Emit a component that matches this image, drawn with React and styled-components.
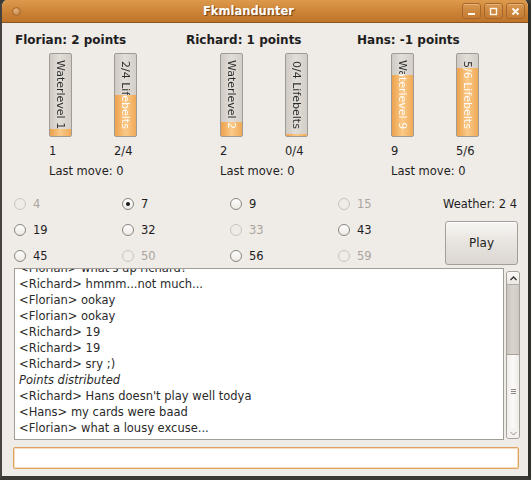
import React from 'react'
import styled, { createGlobalStyle } from 'styled-components'

const GlobalStyle = createGlobalStyle`
  html, body {
    margin: 0;
    padding: 0;
    background: #3c3b37;
  }
  * {
    box-sizing: border-box;
  }
`

const players = [
  { name: 'Florian', points: 2, water: 1, belts: 2, maxBelts: 4, last: 0 },
  { name: 'Richard', points: 1, water: 2, belts: 0, maxBelts: 4, last: 0 },
  { name: 'Hans', points: -1, water: 9, belts: 5, maxBelts: 6, last: 0 },
]

const cards = [
  { n: 4, off: true }, { n: 7, checked: true }, { n: 9 }, { n: 15, off: true },
  { n: 19 }, { n: 32 }, { n: 33, off: true }, { n: 43 },
  { n: 45 }, { n: 50, off: true }, { n: 56 }, { n: 59, off: true },
]

const chat = [
  { t: "<Florian> what's up richard?" },
  { t: '<Richard> hmmm...not much...' },
  { t: '<Florian> ookay' },
  { t: '<Florian> ookay' },
  { t: '<Richard> 19' },
  { t: '<Richard> 19' },
  { t: '<Richard> sry ;)' },
  { t: 'Points distributed', info: true },
  { t: "<Richard> Hans doesn't play well todya" },
  { t: '<Hans> my cards were baad' },
  { t: '<Florian> what a lousy excuse...' },
]

const WATER_MAX = 12

// progress bar: orange fill from the bottom, label turns white where it sits on the fill
const ProgressBar = ({ label, value }) => {
  const pct = Math.round(Math.max(value, 0.025) * 1000) / 10
  return (
    <Bar>
      <Fill $pct={pct} />
      <BarLabel $pct={pct}><Vert>{label}</Vert></BarLabel>
    </Bar>
  )
}

const Radio = ({ n, off, checked }) => (
  <RadioItem $off={off}>
    <Circle $off={off}>{checked && <Dot />}</Circle>
    <span>{n}</span>
  </RadioItem>
)

const App = () => {
  return (
    <>
      <GlobalStyle />
      <Window>
        <TitleBar>
          <MenuDot />
          <Title>Fkmlandunter</Title>
          <WinButtons>
            <WinButton>
              <svg width="9" height="9" viewBox="0 0 9 9"><rect x="1" y="6" width="7" height="2" fill="#fff7ec" /></svg>
            </WinButton>
            <WinButton>
              <svg width="9" height="9" viewBox="0 0 9 9"><rect x="1.5" y="1.5" width="6" height="6" fill="none" stroke="#fff7ec" strokeWidth="1.4" /></svg>
            </WinButton>
            <WinButton>
              <svg width="9" height="9" viewBox="0 0 9 9"><path d="M1.5 1.5 L7.5 7.5 M7.5 1.5 L1.5 7.5" stroke="#fff7ec" strokeWidth="2" /></svg>
            </WinButton>
          </WinButtons>
        </TitleBar>

        <Body>
          <Players>
            {players.map((p) => (
              <Player key={p.name}>
                <PlayerName>{p.name}: {p.points} points</PlayerName>
                <Stats>
                  <Stat>
                    <ProgressBar label={`Waterlevel ${p.water}`} value={p.water / WATER_MAX} />
                    <StatValue>{p.water}</StatValue>
                  </Stat>
                  <Stat>
                    <ProgressBar label={`${p.belts}/${p.maxBelts} Lifebelts`} value={p.belts / p.maxBelts} />
                    <StatValue>{p.belts}/{p.maxBelts}</StatValue>
                  </Stat>
                </Stats>
                <LastMove>Last move: {p.last}</LastMove>
              </Player>
            ))}
          </Players>

          <Controls>
            <RadioGrid>
              {cards.map((c) => <Radio key={c.n} {...c} />)}
            </RadioGrid>
            <Side>
              <Weather>Weather: 2 4</Weather>
              <PlayButton>Play</PlayButton>
            </Side>
          </Controls>

          <ChatRow>
            <ChatLog>
              {chat.map((l, i) => (
                <ChatLine key={i} $info={l.info}>{l.t}</ChatLine>
              ))}
            </ChatLog>
            <Scrollbar>
              <Stepper>
                <svg width="7" height="5" viewBox="0 0 7 5"><path d="M0.5 4 L3.5 1 L6.5 4" fill="none" stroke="#333" strokeWidth="1.3" /></svg>
              </Stepper>
              <Trough />
              <Thumb>
                <Grip />
              </Thumb>
              <Stepper $down>
                <svg width="7" height="5" viewBox="0 0 7 5"><path d="M0.5 1 L3.5 4 L6.5 1" fill="none" stroke="#9a958f" strokeWidth="1" /></svg>
              </Stepper>
            </Scrollbar>
          </ChatRow>

          <Input />
        </Body>
      </Window>
    </>
  )
}

export default App


const Window = styled.div`
  width: 531px;
  height: 480px;
  display: flex;
  flex-direction: column;
  background: #efebe7;
  border-left: 2px solid #45433f;
  border-right: 3px solid #2f2e2b;
  border-bottom: 4px solid #3a3935;
  border-radius: 7px 7px 0 0;
  overflow: hidden;
  font-family: "DejaVu Sans", sans-serif;
  color: #1e1e1e;
`

const TitleBar = styled.div`
  height: 23px;
  flex: none;
  display: flex;
  align-items: center;
  padding: 0 3px 0 8px;
  background: linear-gradient(to bottom, #dd9a4c 0%, #cf873a 45%, #bf7429 100%);
  border-bottom: 1px solid #8a5420;
`

const MenuDot = styled.div`
  width: 9px;
  height: 9px;
  border-radius: 50%;
  margin-left: 2px;
  background: radial-gradient(circle at 40% 35%, #e7b27a, #b87a3c);
  border: 1px solid #a8692d;
`

const Title = styled.div`
  flex: 1;
  text-align: center;
  color: #fff;
  font-weight: bold;
  font-size: 11.5px;
  text-shadow: 1px 1px 1px #6b3e12;
  padding-left: 14px;
`

const WinButtons = styled.div`
  display: flex;
  gap: 3px;
`

const WinButton = styled.div`
  width: 19px;
  height: 16px;
  display: flex;
  align-items: center;
  justify-content: center;
  border-radius: 3px;
  border: 1px solid #a8672a;
  background: linear-gradient(to bottom, #d8974f, #c47b33);
  box-shadow: inset 0 1px 0 rgba(255, 230, 190, 0.4);
`

const Body = styled.div`
  flex: 1;
  display: flex;
  flex-direction: column;
  padding: 10px 8px 0 10px;
`

const Players = styled.div`
  display: grid;
  grid-template-columns: 171px 171px 1fr;
`

const Player = styled.div`
  display: flex;
  flex-direction: column;
  padding-left: 3px;
`

const PlayerName = styled.div`
  font-weight: bold;
  font-size: 12px;
  line-height: 15px;
`

const Stats = styled.div`
  display: flex;
  gap: 42px;
  margin-top: 5px;
  padding-left: 34px;
`

const Stat = styled.div`
  display: flex;
  flex-direction: column;
`

const StatValue = styled.div`
  font-size: 11.5px;
  line-height: 14px;
  margin-top: 7px;
`

const LastMove = styled.div`
  font-size: 11.5px;
  line-height: 14px;
  margin-top: 6px;
  padding-left: 34px;
`

const Bar = styled.div`
  position: relative;
  width: 23px;
  height: 84px;
  display: flex;
  align-items: center;
  justify-content: center;
  border: 1px solid #a19b93;
  border-radius: 2px;
  background: linear-gradient(to right, #cfcac3, #e1ddd7 45%, #d3cec8);
  overflow: hidden;
`

const Fill = styled.div`
  position: absolute;
  left: 0;
  right: 0;
  bottom: 0;
  height: ${({ $pct }) => $pct}%;
  background: linear-gradient(to right, #eca14c, #fbca88 50%, #efa958);
`

const BarLabel = styled.div`
  position: relative;
  width: 100%;
  height: 100%;
  display: flex;
  align-items: center;
  justify-content: center;
  font-size: 11px;
  color: transparent;
  background: linear-gradient(to top, #ffffff ${({ $pct }) => $pct}%, #2a2a2a ${({ $pct }) => $pct}%);
  -webkit-background-clip: text;
  background-clip: text;
`

const Vert = styled.span`
  writing-mode: vertical-rl;
  white-space: nowrap;
`

const Controls = styled.div`
  display: flex;
  margin-top: 13px;
`

const RadioGrid = styled.div`
  display: grid;
  grid-template-columns: repeat(4, 108px);
  grid-template-rows: 26px 26px 25px;
  padding-left: 2px;
`

const RadioItem = styled.div`
  display: flex;
  align-items: center;
  gap: 7px;
  font-size: 11.5px;
  color: ${({ $off }) => ($off ? '#aaa59f' : '#1e1e1e')};
`

const Circle = styled.div`
  width: 12px;
  height: 12px;
  border-radius: 50%;
  display: flex;
  align-items: center;
  justify-content: center;
  border: 1px solid ${({ $off }) => ($off ? '#c9c4be' : '#8a857f')};
  background: ${({ $off }) => ($off ? '#efebe7' : 'linear-gradient(to bottom, #ffffff, #ece8e3)')};
`

const Dot = styled.div`
  width: 4px;
  height: 4px;
  border-radius: 50%;
  background: #1a1a1a;
`

const Side = styled.div`
  display: flex;
  flex-direction: column;
  align-items: flex-start;
  margin-left: -1px;
`

const Weather = styled.div`
  font-size: 11.5px;
  line-height: 26px;
  white-space: nowrap;
  margin-left: -2px;
`

const PlayButton = styled.div`
  width: 73px;
  height: 44px;
  margin-top: 4px;
  display: flex;
  align-items: center;
  justify-content: center;
  font-size: 12px;
  color: #1e1e1e;
  border: 1px solid #a39e97;
  border-radius: 3px;
  background: linear-gradient(to bottom, #f7f5f3, #e6e2dd 55%, #dbd6d0);
  box-shadow: inset 0 1px 0 #ffffff;
`

const ChatRow = styled.div`
  display: flex;
  gap: 2px;
  height: 172px;
  padding-left: 2px;
`

const ChatLog = styled.div`
  width: 491px;
  height: 100%;
  display: flex;
  flex-direction: column;
  justify-content: flex-end;
  overflow: hidden;
  padding: 0 0 3px 4px;
  background: #ffffff;
  border: 1px solid #a19c95;
`

const ChatLine = styled.div`
  font-size: 11.5px;
  line-height: 16px;
  white-space: nowrap;
  color: #2a2a2a;
  font-style: ${({ $info }) => ($info ? 'italic' : 'normal')};
`

const Scrollbar = styled.div`
  width: 14px;
  height: 168px;
  margin-top: 3px;
  display: flex;
  flex-direction: column;
  border: 1px solid #a6a19a;
  border-radius: 3px;
  overflow: hidden;
  background: #d6d1cb;
`

const Stepper = styled.div`
  height: ${({ $down }) => ($down ? '10px' : '13px')};
  display: flex;
  align-items: center;
  justify-content: center;
  background: ${({ $down }) => ($down ? '#f4f2ef' : 'linear-gradient(to bottom, #fbfaf8, #ebe7e2)')};
  border-bottom: ${({ $down }) => ($down ? 'none' : '1px solid #b3ada6')};
`

const Trough = styled.div`
  height: 69px;
  background: linear-gradient(to right, #cbc5be, #d9d4ce 50%, #cfc9c2);
`

const Thumb = styled.div`
  flex: 1;
  display: flex;
  align-items: center;
  justify-content: center;
  border-top: 1px solid #a6a19a;
  background: linear-gradient(to right, #f0ede9, #fbfaf9 50%, #eeebe7);
`

const Grip = styled.div`
  width: 5px;
  height: 5px;
  border-top: 1px solid #8d8882;
  border-bottom: 1px solid #8d8882;
  background: linear-gradient(to bottom, transparent 1px, #8d8882 1px, #8d8882 2px, transparent 2px);
`

const Input = styled.div`
  margin: 7px 0 0 1px;
  width: 506px;
  height: 22px;
  border: 1px solid #dea35f;
  border-radius: 2px;
  background: #ffffff;
  box-shadow: inset 0 0 0 1px #f6dcbc;
`
